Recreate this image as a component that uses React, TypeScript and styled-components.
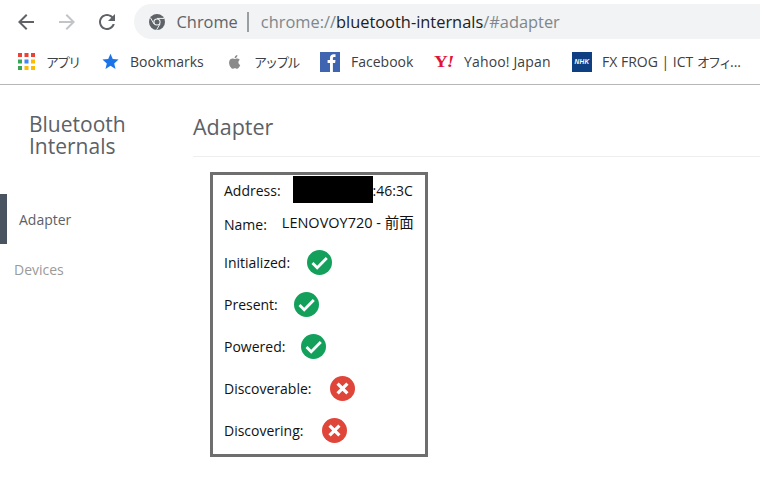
import styled, { createGlobalStyle } from "styled-components";

const GlobalStyle = createGlobalStyle`
  html, body {
    margin: 0;
    height: 100%;
    background: #fff;
    overflow: hidden;
  }
`;

const FONT = `"Open Sans", "Noto Sans CJK JP", sans-serif`;

const Page = styled.div`
  width: 760px;
  height: 491px;
  overflow: hidden;
  font-family: ${FONT};
`;

const Toolbar = styled.div`
  height: 43px;
  display: flex;
  align-items: center;
  padding-left: 14px;
  box-sizing: border-box;
`;

const NavButton = styled.svg<{ $disabled?: boolean }>`
  width: 24px;
  height: 24px;
  margin-right: 16.5px;
  fill: ${(p) => (p.$disabled ? "#c2c4c7" : "#5f6368")};
  flex: none;
`;

const Omnibox = styled.div`
  flex: 1;
  height: 35px;
  margin-left: -2px;
  margin-right: -30px;
  border-radius: 18px;
  background: #f1f3f4;
  display: flex;
  align-items: center;
  padding-left: 15px;
  font-size: 16.4px;
  color: #80868b;
  white-space: nowrap;
`;

const SecureName = styled.span`
  margin-left: 12px;
  color: #5f6368;
`;

const Divider = styled.span`
  width: 2px;
  height: 20px;
  margin: 0 12px 0 9px;
  background: #9a9da1;
`;

const Host = styled.span`
  color: #202124;
`;

const BookmarkBar = styled.div`
  height: 42px;
  display: flex;
  align-items: center;
  padding: 0 0 4px 18px;
  box-sizing: border-box;
  border-bottom: 1px solid #b6b6b6;
`;

const Bookmark = styled.div<{ $width: number; $gap?: number }>`
  width: ${(p) => p.$width}px;
  flex: none;
  display: flex;
  align-items: center;
  gap: ${(p) => p.$gap ?? 11}px;
  font-size: 14px;
  color: #3c4043;
  white-space: nowrap;
`;

const Kana = styled.span`
  font-size: 13px;
  letter-spacing: -1.9px;
`;

const FaviconBox = styled.span<{ $bg: string }>`
  width: 20px;
  height: 20px;
  flex: none;
  background: ${(p) => p.$bg};
  display: flex;
  align-items: center;
  justify-content: center;
`;

const YahooMark = styled.span`
  width: 20px;
  flex: none;
  display: inline-block;
  font: 700 16px "Liberation Serif", serif;
  color: #e0133a;
  transform: scaleX(1.2);
  transform-origin: left center;
  white-space: nowrap;

  i {
    margin-left: -1px;
  }
`;

const YahooLabel = styled.span`
  letter-spacing: 0.15px;
`;

const NhkMark = styled.span`
  font: italic 700 6.5px "Liberation Sans", sans-serif;
  letter-spacing: 0.3px;
  color: #fff;
`;

const Body = styled.div`
  display: flex;
`;

const Sidebar = styled.nav`
  width: 193px;
  flex: none;
`;

const SidebarTitle = styled.h1`
  margin: 0;
  padding: 28px 0 0 29px;
  font-size: 21px;
  font-weight: 400;
  line-height: 22px;
  color: #5c6166;
`;

const SideItem = styled.div<{ $active?: boolean }>`
  height: 50px;
  display: flex;
  align-items: center;
  font-size: 14px;
  box-sizing: border-box;
  ${(p) =>
    p.$active
      ? `
    margin-top: 37px;
    padding-left: 12px;
    border-left: 7px solid #4a5461;
    color: #5c6166;
  `
      : `
    padding-left: 14px;
    color: #9a9a9a;
  `}
`;

const Main = styled.main`
  flex: 1;
`;

const PageHeader = styled.h2`
  height: 72px;
  margin: 0;
  padding-top: 27px;
  box-sizing: border-box;
  border-bottom: 1px solid #eeeeee;
  font-size: 21.5px;
  font-weight: 400;
  line-height: 30px;
  color: #5c6166;
`;

const Card = styled.div`
  width: 218px;
  height: 285px;
  margin: 15px 0 0 17px;
  padding-left: 11px;
  box-sizing: border-box;
  border: 3px solid #6e6e6e;
  font-size: 14px;
  color: #111;
`;

const Row = styled.div<{ $height: number }>`
  height: ${(p) => p.$height}px;
  display: flex;
  align-items: center;
  white-space: nowrap;
`;

const Label = styled.span<{ $gap?: number; $drop?: number }>`
  margin-right: ${(p) => p.$gap ?? 16}px;
  margin-top: ${(p) => p.$drop ?? 0}px;
`;

const AddressTail = styled.span`
  margin-top: 2px;
`;

const Redacted = styled.span`
  width: 80px;
  height: 27px;
  background: #000;
  flex: none;
`;

const NameValue = styled.span`
  font-size: 14.5px;
  margin-bottom: 3px;
`;

const StatusDot = styled.svg`
  width: 25px;
  height: 25px;
  flex: none;
`;

function Status({ ok }: { ok: boolean }) {
  return (
    <StatusDot viewBox="0 0 25 25">
      <circle cx="12.5" cy="12.5" r="12.5" fill={ok ? "#13a05b" : "#e0453a"} />
      {ok ? (
        <path d="M5.5 13l4.7 4.7 9.6-9.7" fill="none" stroke="#fff" strokeWidth="2.8" />
      ) : (
        <path d="M7.6 7.6l9.8 9.8M17.4 7.6l-9.8 9.8" fill="none" stroke="#fff" strokeWidth="3.2" />
      )}
    </StatusDot>
  );
}

function AppsIcon() {
  const colors = ["#ea4335", "#ea4335", "#ea4335", "#34a853", "#4285f4", "#fbbc05", "#34a853", "#fbbc05", "#fbbc05"];
  return (
    <svg width="17" height="17" viewBox="0 0 17 17" style={{ flex: "none" }}>
      {colors.map((c, i) => (
        <rect key={i} x={(i % 3) * 6.5} y={Math.floor(i / 3) * 6.5} width="4" height="4" fill={c} />
      ))}
    </svg>
  );
}

function ChromeIcon() {
  return (
    <svg width="16" height="16" viewBox="0 0 16 16" style={{ flex: "none" }}>
      <circle cx="8" cy="8" r="8" fill="#5f6368" />
      <circle cx="8" cy="8" r="3.6" fill="#f1f3f4" />
      <circle cx="8" cy="8" r="2.5" fill="#5f6368" />
      <path d="M8 4.4h7M5 10l-3.4-6M11 10l-3.4 5.8" stroke="#f1f3f4" strokeWidth="1" fill="none" />
    </svg>
  );
}

const rows = [
  { label: "Initialized:", ok: true, height: 42, gap: 17 },
  { label: "Present:", ok: true, height: 42, gap: 16 },
  { label: "Powered:", ok: true, height: 42, gap: 16 },
  { label: "Discoverable:", ok: false, height: 42, gap: 18 },
  { label: "Discovering:", ok: false, height: 42, gap: 19 },
];

export default function App() {
  return (
    <Page>
      <GlobalStyle />
      <Toolbar>
        <NavButton viewBox="0 0 24 24">
          <path d="M20 11H7.83l5.59-5.59L12 4l-8 8 8 8 1.41-1.41L7.83 13H20v-2z" />
        </NavButton>
        <NavButton viewBox="0 0 24 24" $disabled>
          <path d="M4 11h12.17l-5.59-5.59L12 4l8 8-8 8-1.41-1.41L16.17 13H4v-2z" />
        </NavButton>
        <NavButton viewBox="0 0 24 24">
          <path d="M17.65 6.35C16.2 4.9 14.21 4 12 4c-4.42 0-7.99 3.58-7.99 8s3.57 8 7.99 8c3.73 0 6.84-2.55 7.73-6h-2.08c-.82 2.33-3.04 4-5.65 4-3.31 0-6-2.69-6-6s2.69-6 6-6c1.66 0 3.14.69 4.22 1.78L13 11h7V4l-2.35 2.35z" />
        </NavButton>
        <Omnibox>
          <ChromeIcon />
          <SecureName>Chrome</SecureName>
          <Divider />
          chrome://<Host>bluetooth-internals</Host>/#adapter
        </Omnibox>
      </Toolbar>
      <BookmarkBar>
        <Bookmark $width={84}>
          <AppsIcon />
          <Kana>アプリ</Kana>
        </Bookmark>
        <Bookmark $width={125}>
          <svg width="17" height="17" viewBox="0 0 24 24" fill="#1a73e8" style={{ flex: "none" }}>
            <path d="M12 1l3.2 7.6 8.2.7-6.2 5.4 1.9 8L12 18l-7.1 4.7 1.9-8L.6 9.3l8.2-.7z" />
          </svg>
          Bookmarks
        </Bookmark>
        <Bookmark $width={93}>
          <svg width="16" height="18" viewBox="0 0 24 24" fill="#8a8a8a" style={{ flex: "none" }}>
            <path d="M17.05 12.54c-.03-2.6 2.12-3.85 2.22-3.91-1.21-1.77-3.09-2.01-3.76-2.04-1.6-.16-3.12.94-3.93.94-.81 0-2.06-.92-3.39-.89-1.74.03-3.35 1.01-4.25 2.57-1.81 3.14-.46 7.79 1.3 10.34.86 1.25 1.89 2.65 3.24 2.6 1.3-.05 1.79-.84 3.36-.84 1.57 0 2.01.84 3.39.81 1.4-.02 2.28-1.27 3.14-2.53.99-1.45 1.4-2.86 1.42-2.93-.03-.01-2.71-1.04-2.74-4.12zM14.5 4.9c.72-.87 1.2-2.08 1.07-3.28-1.03.04-2.28.69-3.02 1.56-.66.77-1.24 2-1.09 3.18 1.15.09 2.32-.58 3.04-1.46z" />
          </svg>
          <Kana>アップル</Kana>
        </Bookmark>
        <Bookmark $width={114}>
          <FaviconBox $bg="#3f65b0">
            <svg width="12" height="20" viewBox="0 0 12 20" fill="#fff">
              <path d="M6 20v-9H3.6V8H6V6c0-2.6 1.5-3.8 3.6-3.8.9 0 1.7.1 1.9.1v2.6h-1.3C9 4.9 8.9 5.5 8.9 6.3V8h2.6l-.4 3H8.9v9z" />
            </svg>
          </FaviconBox>
          Facebook
        </Bookmark>
        <Bookmark $width={138} $gap={10}>
          <YahooMark>
            Y<i>!</i>
          </YahooMark>
          <YahooLabel>Yahoo! Japan</YahooLabel>
        </Bookmark>
        <Bookmark $width={170} $gap={10}>
          <FaviconBox $bg="#0e3f82">
            <NhkMark>NHK</NhkMark>
          </FaviconBox>
          <span>
            FX FROG | ICT <Kana>オフィ</Kana>...
          </span>
        </Bookmark>
      </BookmarkBar>
      <Body>
        <Sidebar>
          <SidebarTitle>
            Bluetooth
            <br />
            Internals
          </SidebarTitle>
          <SideItem $active>Adapter</SideItem>
          <SideItem>Devices</SideItem>
        </Sidebar>
        <Main>
          <PageHeader>Adapter</PageHeader>
          <Card>
            <Row $height={29}>
              <Label $gap={12} $drop={2}>
                Address:
              </Label>
              <Redacted />
              <AddressTail>:46:3C</AddressTail>
            </Row>
            <Row $height={37}>
              <Label $gap={15} $drop={4}>
                Name:
              </Label>
              <NameValue>LENOVOY720 - 前面</NameValue>
            </Row>
            {rows.map((r) => (
              <Row key={r.label} $height={r.height}>
                <Label $gap={r.gap}>{r.label}</Label>
                <Status ok={r.ok} />
              </Row>
            ))}
          </Card>
        </Main>
      </Body>
    </Page>
  );
}
